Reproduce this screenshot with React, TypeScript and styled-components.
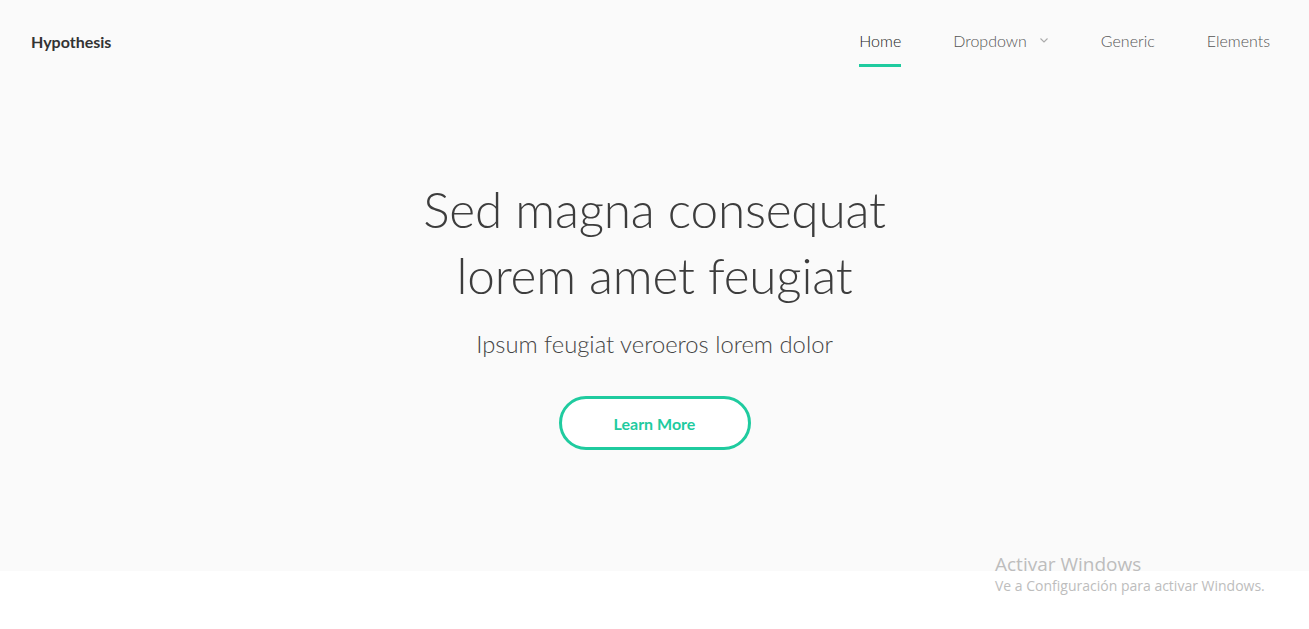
import React from "react";
import styled, { createGlobalStyle } from "styled-components";

const Global = createGlobalStyle`
  html, body { margin: 0; padding: 0; background: #ffffff; }
  body { font-family: Lato, "Open Sans", sans-serif; color: #444; }
  * { box-sizing: border-box; }
`;

const Page = styled.div`
  position: relative;
  width: 100%;
  min-height: 629px;
  background: #ffffff;
`;

const Hero = styled.section`
  background: #fafafa;
  height: 571px;
  display: flex;
  flex-direction: column;
`;

const Header = styled.header`
  height: 84px;
  display: flex;
  align-items: center;
  justify-content: space-between;
  padding: 0 39px 0 31px;
`;

const Logo = styled.a`
  font-family: Lato, sans-serif;
  font-weight: 700;
  font-size: 16px;
  color: #333;
  text-decoration: none;
  margin-top: -2px;
`;

const Nav = styled.nav`
  display: flex;
  align-items: stretch;
  height: 100%;
  gap: 52px;
`;

const NavItem = styled.a<{ $active?: boolean }>`
  position: relative;
  display: flex;
  align-items: center;
  gap: 12px;
  font-family: Lato, sans-serif;
  font-weight: 300;
  font-size: 16px;
  color: ${(p) => (p.$active ? "#222" : "#555")};
  text-decoration: none;
  padding-bottom: 4px;
  &::after {
    content: "";
    display: ${(p) => (p.$active ? "block" : "none")};
    position: absolute;
    left: 0;
    right: 0;
    top: 64px;
    height: 3px;
    background: #1fcb9f;
  }
`;

const Caret = styled.svg`
  width: 10px;
  height: 10px;
  margin-top: -1px;
`;

const Banner = styled.div`
  flex: 1;
  display: flex;
  flex-direction: column;
  align-items: center;
  padding-top: 92px;
`;

const Title = styled.h1`
  margin: 0;
  font-family: Lato, sans-serif;
  font-weight: 300;
  font-size: 49.5px;
  line-height: 66px;
  color: #3d3d3d;
  text-align: center;
  letter-spacing: -0.2px;
`;

const Subtitle = styled.p`
  margin: 19px 0 0;
  font-family: Lato, sans-serif;
  font-weight: 300;
  font-size: 23.8px;
  line-height: 34px;
  color: #444;
`;

const Button = styled.a`
  margin-top: 35px;
  width: 192px;
  height: 54px;
  border: 3px solid #1fcb9f;
  border-radius: 27px;
  background: #ffffff;
  display: flex;
  align-items: center;
  justify-content: center;
  font-family: Lato, sans-serif;
  font-weight: 700;
  font-size: 16px;
  color: #1fcb9f;
  text-decoration: none;
`;

const Watermark = styled.div`
  position: absolute;
  left: 995px;
  top: 551px;
  font-family: "Open Sans", "Noto Sans", sans-serif;
  color: #bdbdbd;
  pointer-events: none;
`;

const WmTitle = styled.div`
  font-size: 19px;
  line-height: 26px;
  font-weight: 400;
`;

const WmSub = styled.div`
  font-size: 14px;
  line-height: 18px;
`;

export default function App() {
  return (
    <Page>
      <Global />
      <Hero>
        <Header>
          <Logo>Hypothesis</Logo>
          <Nav>
            <NavItem $active>Home</NavItem>
            <NavItem>
              Dropdown
              <Caret viewBox="0 0 10 10">
                <path d="M1.5 3.5 L5 7 L8.5 3.5" fill="none" stroke="#aaa" strokeWidth="1.1" />
              </Caret>
            </NavItem>
            <NavItem>Generic</NavItem>
            <NavItem>Elements</NavItem>
          </Nav>
        </Header>
        <Banner>
          <Title>
            Sed magna consequat
            <br />
            lorem amet feugiat
          </Title>
          <Subtitle>Ipsum feugiat veroeros lorem dolor</Subtitle>
          <Button>Learn More</Button>
        </Banner>
      </Hero>
      <Watermark>
        <WmTitle>Activar Windows</WmTitle>
        <WmSub>Ve a Configuración para activar Windows.</WmSub>
      </Watermark>
    </Page>
  );
}
